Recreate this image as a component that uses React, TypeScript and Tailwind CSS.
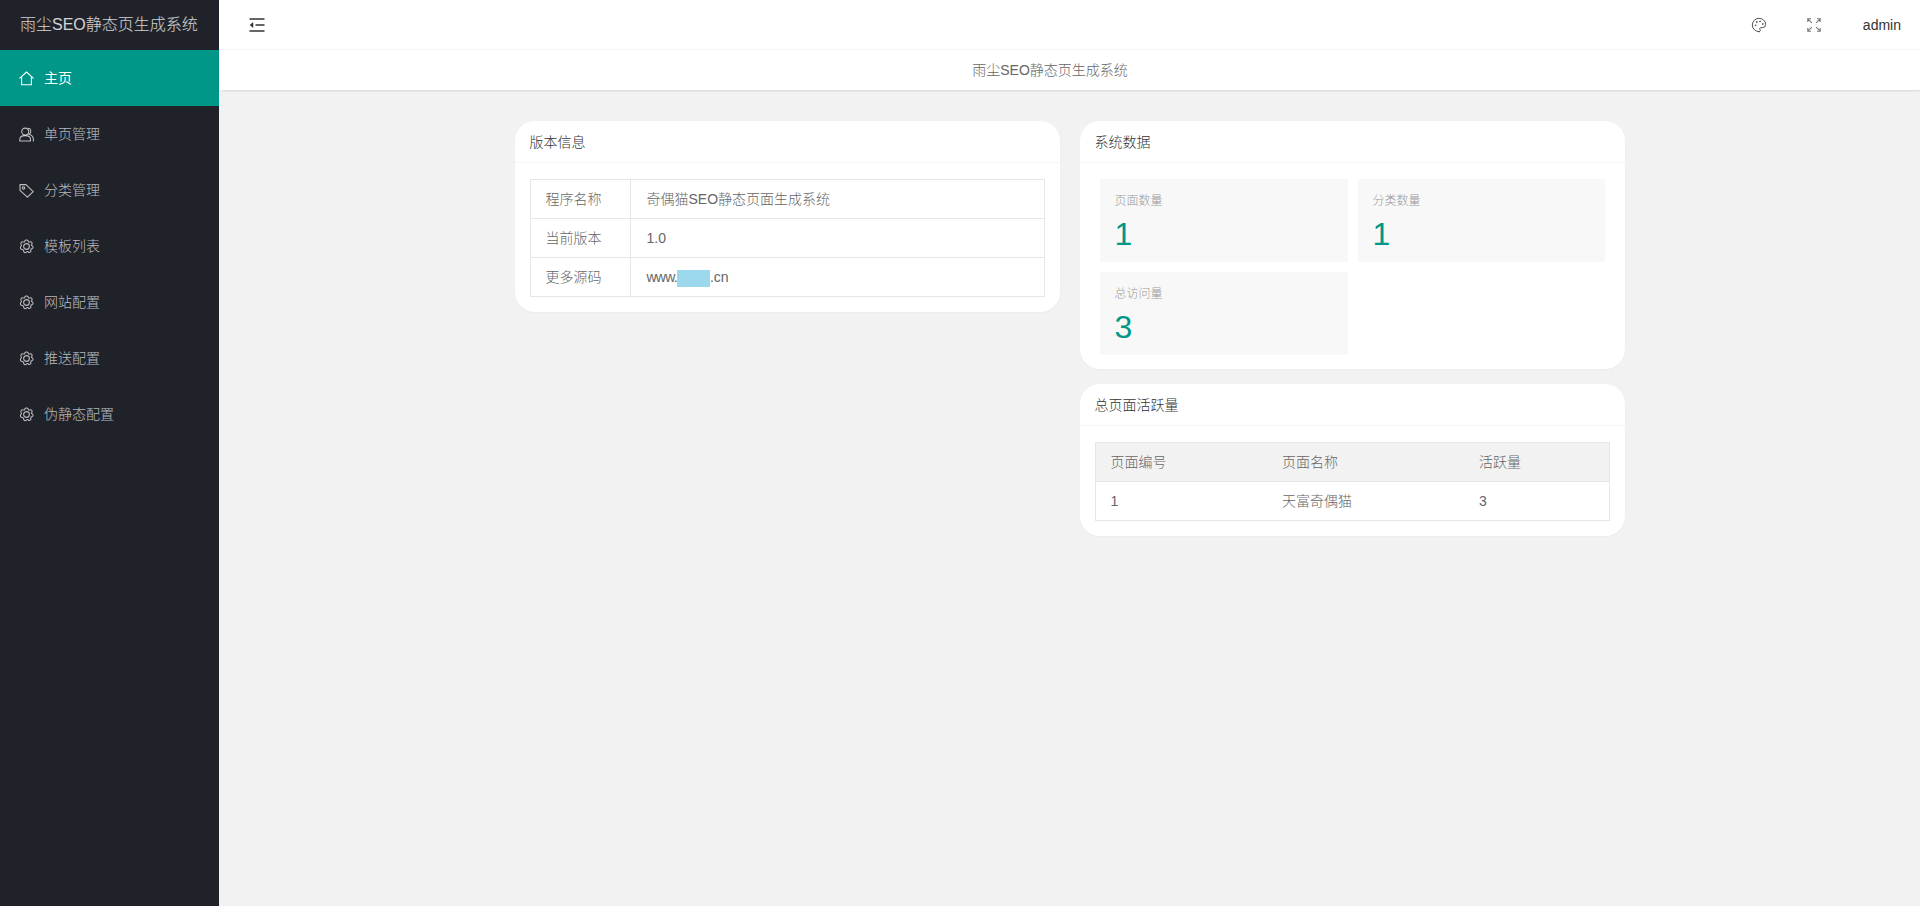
import React from "react";
import { Palette } from "lucide-react";

const FONT = { fontFamily: '"Liberation Sans", "Noto Sans CJK SC", sans-serif' };

function HomeIcon() {
  return (
    <svg width="15" height="15" viewBox="0 0 15 15" fill="none" stroke="currentColor" strokeWidth="1.1">
      <path d="M0.8 7.2 7.5 1 14.2 7.2" strokeLinecap="round" strokeLinejoin="round" />
      <path d="M2.6 6V13.8H12.4V6" strokeLinejoin="round" />
    </svg>
  );
}
function UserIcon() {
  return (
    <svg width="15" height="15" viewBox="0 0 15 15" fill="none" stroke="currentColor" strokeWidth="1.1">
      <circle cx="6.2" cy="4.6" r="3.5" />
      <path d="M0.8 14V12.4C0.8 9.9 3 8.6 6.2 8.6S11.5 9.9 11.5 12.4V14Z" strokeLinejoin="round" />
      <path d="M9.6 1.3C12 1.6 12.8 5.6 10.2 7.2 12.8 8 14.4 9.6 14.4 12.4V14" strokeLinecap="round" />
    </svg>
  );
}
function TagIcon() {
  return (
    <svg width="15" height="15" viewBox="0 0 15 15" fill="none" stroke="currentColor" strokeWidth="1.1">
      <path d="M1 1.6H7L14.2 8.6 8.4 14.2 1 7.4Z" strokeLinejoin="round" />
      <circle cx="4.5" cy="4.9" r="1.2" />
    </svg>
  );
}
function CogIcon() {
  return (
    <svg width="15" height="15" viewBox="0 0 24 24" fill="none" stroke="currentColor" strokeWidth="1.7" strokeLinejoin="round">
      <path d="M9.4 3.2C9.8 1 14.2 1 14.6 3.2 15 4.8 16.2 5.4 17.6 4.6 19.6 3.6 22 6.4 20.6 8.2 19.7 9.5 19.9 10.6 21.2 11 23.2 11.8 22.6 15.6 20.4 15.8 18.9 16 18.4 17.1 19 18.4 20 20.4 16.8 22.4 15.2 20.8 14.1 19.7 12.9 19.7 12 20.8 10.4 22.8 7.2 21.6 7.4 19.2 7.5 17.6 6.6 16.7 5 16.8 2.6 16.9 1.2 13.4 3 11.8 4.2 10.8 4.3 9.6 3.4 8.4 2 6.4 4.6 3.6 6.6 4.6 8 5.3 9 4.8 9.4 3.2Z" />
      <circle cx="12" cy="12" r="4.6" />
    </svg>
  );
}
function ShrinkIcon() {
  return (
    <svg width="16" height="14" viewBox="0 0 16 14" fill="none" stroke="#333" strokeWidth="1.4">
      <path d="M0.5 1H15.5M6.5 7H15.5M0.5 13H15.5" />
      <path d="M4 4.6 1 7 4 9.4Z" fill="#333" strokeWidth="0.5" />
    </svg>
  );
}
function ExpandIcon() {
  return (
    <svg width="14" height="14" viewBox="0 0 14 14" fill="none" stroke="#777" strokeWidth="1.1">
      <path d="M0.8 4V0.8H4M0.8 0.8 4.8 4.8M10 0.8H13.2V4M13.2 0.8 9.2 4.8M0.8 10V13.2H4M0.8 13.2 4.8 9.2M10 13.2H13.2V10M13.2 13.2 9.2 9.2" />
    </svg>
  );
}

const NAV = [
  { label: "主页", icon: <HomeIcon />, active: true },
  { label: "单页管理", icon: <UserIcon /> },
  { label: "分类管理", icon: <TagIcon /> },
  { label: "模板列表", icon: <CogIcon /> },
  { label: "网站配置", icon: <CogIcon /> },
  { label: "推送配置", icon: <CogIcon /> },
  { label: "伪静态配置", icon: <CogIcon /> },
];

function Card({ title, children, bodyClass }: { title: string; children: React.ReactNode; bodyClass: string }) {
  return (
    <div className="rounded-[20px] bg-white shadow-[0_1px_2px_rgba(0,0,0,0.03)]">
      <div className="flex h-[42px] items-center border-b border-[#f6f6f6] px-[15px] text-sm font-light text-[#333]">{title}</div>
      <div className={bodyClass}>{children}</div>
    </div>
  );
}

function Stat({ label, value }: { label: string; value: string }) {
  return (
    <div className="h-[83px] bg-[#f8f8f8] px-[15px] pt-[13px]">
      <div className="text-xs font-light leading-[18px] text-[#999]">{label}</div>
      <div className="mt-[6px] text-[32px] leading-[36px] text-[#009688]">{value}</div>
    </div>
  );
}

const cell = "h-[39px] border border-[#e6e6e6] px-[15px] py-0 text-left text-sm font-light text-[#666]";
const cellR = "h-[39px] border border-[#e6e6e6] pl-[16px] pr-[15px] py-0 text-left text-sm font-light text-[#666]";

export default function App() {
  return (
    <div className="flex h-[906px] w-full overflow-hidden bg-[#f2f2f2]" style={FONT}>
      <aside className="w-[219px] shrink-0 bg-[#20222a]">
        <div className="flex h-[50px] items-center pl-5 text-base font-light text-white/80">雨尘SEO静态页生成系统</div>
        <nav>
          {NAV.map((n) => (
            <div
              key={n.label}
              className={
                n.active
                  ? "flex h-[56px] items-center bg-[#009688] pl-[19px] text-sm text-white"
                  : "flex h-[56px] items-center pl-[19px] text-sm font-light text-white/70"
              }
            >
              <span className="mr-[10px] flex w-[15px] justify-center">{n.icon}</span>
              {n.label}
            </div>
          ))}
        </nav>
      </aside>
      <div className="flex min-w-0 flex-1 flex-col">
        <header className="flex h-[50px] items-center border-b border-[#f6f6f6] bg-white pl-[30px] pr-[19px]">
          <ShrinkIcon />
          <div className="ml-auto flex items-center text-sm font-light text-[#333]">
            <Palette size={16} strokeWidth={1.4} color="#444" />
            <span className="ml-[40px] mr-[42px] flex"><ExpandIcon /></span>
            <span>admin</span>
          </div>
        </header>
        <div className="flex h-[40px] items-center justify-center bg-white pr-[39px] text-sm font-light text-[#666] shadow-[0_1px_2px_rgba(0,0,0,0.12)]">
          雨尘SEO静态页生成系统
        </div>
        <main className="flex flex-1 justify-center gap-5 border-l-[3px] border-[#eef1f5] pr-[3px] pt-[31px]">
          <div className="w-[545px]">
            <Card title="版本信息" bodyClass="px-[15px] pb-[15px] pt-[16px]">
              <table className="w-full border-collapse">
                <tbody>
                  <tr>
                    <td className={cell + " w-[100px]"}>程序名称</td>
                    <td className={cellR}>奇偶猫SEO静态页面生成系统</td>
                  </tr>
                  <tr>
                    <td className={cell}>当前版本</td>
                    <td className={cellR}>1.0</td>
                  </tr>
                  <tr>
                    <td className={cell}>更多源码</td>
                    <td className={cellR}>
                      <span className="tracking-[-0.75px]">www.</span>
                      <span className="inline-block h-[17px] w-[33px] align-middle bg-[#9bd8ec]" />
                      .cn
                    </td>
                  </tr>
                </tbody>
              </table>
            </Card>
          </div>
          <div className="flex w-[545px] flex-col gap-[15px]">
            <Card title="系统数据" bodyClass="grid grid-cols-[248px_247px] gap-x-[10px] gap-y-[10px] px-[20px] pb-[14px] pt-[16px]">
              <Stat label="页面数量" value="1" />
              <Stat label="分类数量" value="1" />
              <Stat label="总访问量" value="3" />
            </Card>
            <Card title="总页面活跃量" bodyClass="px-[15px] pb-[15px] pt-[16px]">
              <table className="w-full table-fixed border-collapse">
                <thead>
                  <tr className="bg-[#f2f2f2]">
                    <th className={cell + " w-[172px] border-r-0"}>页面编号</th>
                    <th className={cell + " w-[197px] border-x-0"}>页面名称</th>
                    <th className={cell + " border-l-0"}>活跃量</th>
                  </tr>
                </thead>
                <tbody>
                  <tr>
                    <td className={cell + " border-r-0"}>1</td>
                    <td className={cell + " border-x-0"}>天富奇偶猫</td>
                    <td className={cell + " border-l-0"}>3</td>
                  </tr>
                </tbody>
              </table>
            </Card>
          </div>
        </main>
      </div>
    </div>
  );
}
